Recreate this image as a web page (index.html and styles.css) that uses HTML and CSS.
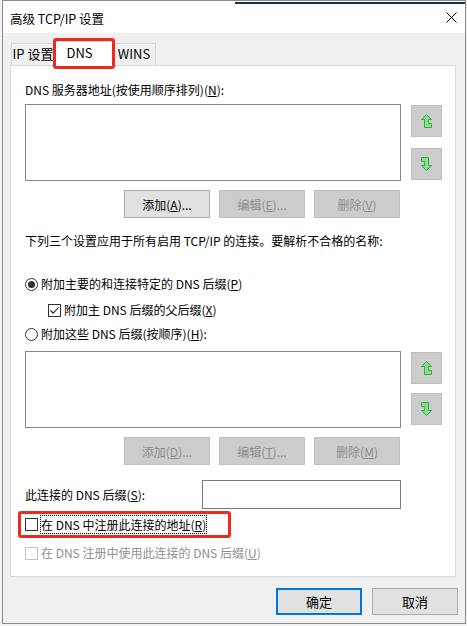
FILE: index.html
```html
<!DOCTYPE html>
<html lang="zh-CN">
<head>
    <meta charset="UTF-8">
    <title>高级 TCP/IP 设置</title>
    <link rel="stylesheet" href="styles.css">
</head>
<body>
    <div class="window">
        <div class="titlebar">
            <span class="title">高级 TCP/IP 设置</span>
            <svg class="close" width="11" height="11" viewBox="0 0 11 11">
                <path d="M0.5 0.5 L10.5 10.5 M10.5 0.5 L0.5 10.5" stroke="#000" stroke-width="1" fill="none"/>
            </svg>
        </div>

        <div class="client">
            <div class="tabs">
                <div class="tab">IP 设置</div>
                <div class="tab selected">DNS<span class="mark mark-tab"></span></div>
                <div class="tab">WINS</div>
            </div>

            <div class="panel">
                <div class="label row-label">DNS 服务器地址(按使用顺序排列)(<u>N</u>):</div>

                <div class="list-row">
                    <div class="listbox"></div>
                    <div class="side">
                        <div class="arrow-btn">
                            <svg width="11" height="14" viewBox="0 0 11 14"><path d="M5.5 0.5 L10.5 5.5 L7.5 5.5 L7.5 9.5 L10.5 9.5 L10.5 13.5 L3.5 13.5 L3.5 5.5 L0.5 5.5 Z" fill="#86e08a" stroke="#3aa845"/></svg>
                        </div>
                        <div class="arrow-btn">
                            <svg width="11" height="14" viewBox="0 0 11 14"><path d="M0.5 0.5 L7.5 0.5 L7.5 8.5 L10.5 8.5 L5.5 13.5 L0.5 8.5 L3.5 8.5 L3.5 4.5 L0.5 4.5 Z" fill="#86e08a" stroke="#3aa845"/></svg>
                        </div>
                    </div>
                </div>

                <div class="btn-row">
                    <button class="btn">添加(<u>A</u>)...</button>
                    <button class="btn" disabled>编辑(<u>E</u>)...</button>
                    <button class="btn" disabled>删除(<u>V</u>)</button>
                </div>

                <div class="label row-note">下列三个设置应用于所有启用 TCP/IP 的连接。要解析不合格的名称:</div>

                <div class="option row-radio1">
                    <span class="radio checked"></span>
                    <span>附加主要的和连接特定的 DNS 后缀(<u>P</u>)</span>
                </div>
                <div class="option row-check1">
                    <span class="check">
                        <svg width="11" height="11" viewBox="0 0 11 11"><path d="M1.5 5.5 L4.2 8.2 L9.5 2.5" stroke="#222" stroke-width="1.1" fill="none"/></svg>
                    </span>
                    <span>附加主 DNS 后缀的父后缀(<u>X</u>)</span>
                </div>
                <div class="option row-radio2">
                    <span class="radio"></span>
                    <span>附加这些 DNS 后缀(按顺序)(<u>H</u>):</span>
                </div>

                <div class="list-row row-list2">
                    <div class="listbox"></div>
                    <div class="side side-2">
                        <div class="arrow-btn">
                            <svg width="11" height="14" viewBox="0 0 11 14"><path d="M5.5 0.5 L10.5 5.5 L7.5 5.5 L7.5 9.5 L10.5 9.5 L10.5 13.5 L3.5 13.5 L3.5 5.5 L0.5 5.5 Z" fill="#86e08a" stroke="#3aa845"/></svg>
                        </div>
                        <div class="arrow-btn">
                            <svg width="11" height="14" viewBox="0 0 11 14"><path d="M0.5 0.5 L7.5 0.5 L7.5 8.5 L10.5 8.5 L5.5 13.5 L0.5 8.5 L3.5 8.5 L3.5 4.5 L0.5 4.5 Z" fill="#86e08a" stroke="#3aa845"/></svg>
                        </div>
                    </div>
                </div>

                <div class="btn-row">
                    <button class="btn" disabled>添加(<u>D</u>)...</button>
                    <button class="btn" disabled>编辑(<u>T</u>)...</button>
                    <button class="btn" disabled>删除(<u>M</u>)</button>
                </div>

                <div class="suffix-row">
                    <span>此连接的 DNS 后缀(<u>S</u>):</span>
                    <div class="textbox"></div>
                </div>

                <div class="option row-check2">
                    <span class="check"></span>
                    <span class="focus">在 DNS 中注册此连接的地址(<u>R</u>)</span>
                    <span class="mark mark-check"></span>
                </div>
                <div class="option row-check3 disabled">
                    <span class="check"></span>
                    <span>在 DNS 注册中使用此连接的 DNS 后缀(<u>U</u>)</span>
                </div>
            </div>

            <div class="footer">
                <button class="btn default">确定</button>
                <button class="btn">取消</button>
            </div>
        </div>
    </div>
</body>
</html>
```

FILE: styles.css
```css
body {
    margin: 0;
    background: #f3f3f3;
    font-family: "Noto Sans CJK SC", "Noto Sans", sans-serif;
    font-size: 12px;
    color: #000;
}

.window {
    box-sizing: border-box;
    width: 464px;
    height: 624px;
    margin-left: 2px;
    border: 1px solid #8a8a8a;
    background: #f0f0f0;
}

.titlebar {
    height: 31px;
    display: flex;
    align-items: center;
    background: #fff;
    padding-left: 7px;
    border-top: 1px solid #fff;
    background-image: linear-gradient(#1c2f4a, #1c2f4a);
    background-size: 230px 2px;
    background-position: right top;
    background-repeat: no-repeat;
}

.title {
    font-size: 12.5px;
    margin-top: 1px;
}

.close {
    margin-left: auto;
    margin-right: 8px;
}

.client {
    padding-left: 7px;
}

/* tabs */
.tabs {
    display: flex;
    align-items: flex-end;
    height: 24px;
    margin-top: 8px;
    padding-left: 1px;
}

.tab {
    box-sizing: border-box;
    height: 22px;
    width: 44px;
    line-height: 20px;
    text-align: center;
    border: 1px solid #d9d9d9;
    border-bottom: none;
    background: #f0f0f0;
    font-size: 13px;
}

.tab.selected {
    position: relative;
    z-index: 1;
    width: 59px;
    height: 25px;
    margin: 0 -1px -1px -1px;
    line-height: 22px;
    background: #fff;
    padding-right: 8px;
}

.mark {
    position: absolute;
    box-sizing: border-box;
    border: 3px solid #ec2a1f;
    border-radius: 3px;
}

.mark-tab {
    left: -2px;
    top: -4px;
    width: 62px;
    height: 31px;
}

/* panel */
.panel {
    box-sizing: border-box;
    width: 446px;
    height: 512px;
    border: 1px solid #d9d9d9;
    background: #fff;
    padding-left: 14px;
}

.label {
    height: 16px;
    line-height: 16px;
}

.row-label {
    margin-top: 16px;
}

.list-row {
    display: flex;
    margin-top: 6px;
    height: 77px;
}

.listbox {
    box-sizing: border-box;
    width: 376px;
    height: 77px;
    border: 1px solid #828790;
    background: #fff;
}

.side {
    display: flex;
    flex-direction: column;
    gap: 11px;
    margin-left: 10px;
    padding-top: 1px;
}

.side-2 {
    gap: 9px;
}

.arrow-btn {
    box-sizing: border-box;
    width: 31px;
    height: 32px;
    background: #cccccc;
    border: 1px solid #bfbfbf;
    display: flex;
    align-items: center;
    justify-content: center;
}

.btn-row {
    display: flex;
    justify-content: flex-end;
    gap: 9px;
    width: 375px;
    margin-top: 9px;
}

.btn {
    box-sizing: border-box;
    width: 86px;
    height: 28px;
    padding: 0;
    font-family: inherit;
    font-size: 12px;
    color: #000;
    background: #e1e1e1;
    border: 1px solid #adadad;
}

.btn:disabled {
    background: #cccccc;
    border-color: #bfbfbf;
    color: #8c8c8c;
}

.row-note {
    margin-top: 15px;
}

/* radios and checkboxes */
.option {
    position: relative;
    display: flex;
    align-items: center;
    gap: 3px;
    height: 16px;
    line-height: 16px;
}

.radio,
.check {
    box-sizing: border-box;
    width: 13px;
    height: 13px;
    border: 1px solid #333;
    background: #fff;
    flex: none;
    display: flex;
    align-items: center;
    justify-content: center;
}

.radio {
    border-radius: 50%;
}

.radio.checked::after {
    content: "";
    width: 7px;
    height: 7px;
    border-radius: 50%;
    background: #333;
}

.row-radio1 {
    margin-top: 27px;
}

.row-check1 {
    margin-top: 10px;
    padding-left: 23px;
}

.row-radio2 {
    margin-top: 8px;
}

.row-list2 {
    margin-top: 9px;
}

.suffix-row {
    display: flex;
    align-items: center;
    width: 376px;
    height: 29px;
    margin-top: 15px;
}

.textbox {
    box-sizing: border-box;
    margin-left: auto;
    width: 199px;
    height: 29px;
    border: 1px solid #7a7a7a;
    background: #fff;
}

.row-check2 {
    margin-top: 7px;
}

.focus {
    outline: 1px dotted #000;
    outline-offset: 0;
    line-height: 17px;
}

.mark-check {
    left: -7px;
    top: -5px;
    width: 213px;
    height: 27px;
}

.row-check3 {
    margin-top: 13px;
}

.disabled {
    color: #8f8f8f;
}

.disabled .check {
    border-color: #c4c4c4;
}

/* footer */
.footer {
    display: flex;
    justify-content: flex-end;
    gap: 10px;
    margin-top: 11px;
    padding-right: 7px;
}

.footer .btn {
    height: 27px;
    font-size: 13px;
}

.btn.default {
    border: 2px solid #0078d7;
}
```
